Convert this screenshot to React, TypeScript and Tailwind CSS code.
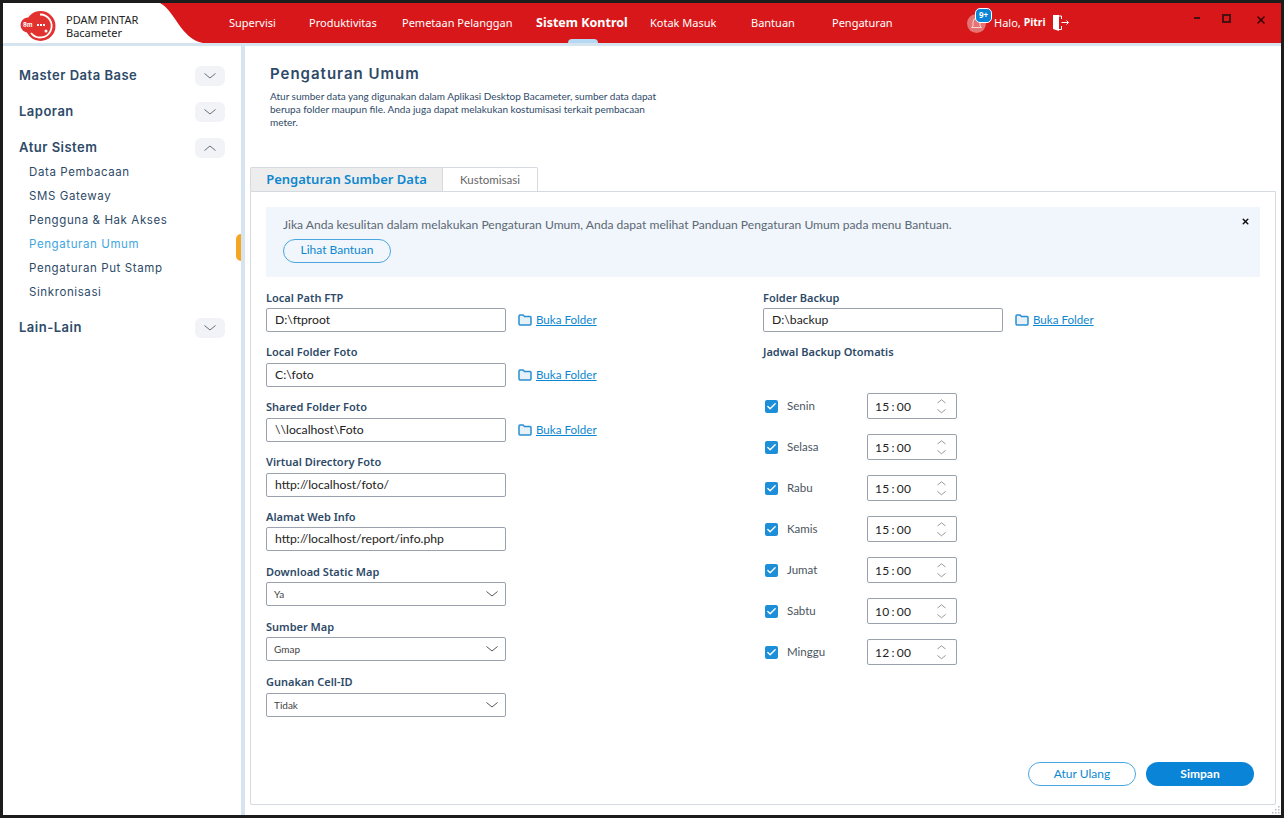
import React from 'react';
import { Check, X } from 'lucide-react';

const navItems = [
  { label: 'Supervisi', width: 'w-[80px]' },
  { label: 'Produktivitas', width: 'w-[93px]' },
  { label: 'Pemetaan Pelanggan', width: 'w-[134px]' },
  { label: 'Sistem Kontrol', width: 'w-[114px]', active: true },
  { label: 'Kotak Masuk', width: 'w-[101px]' },
  { label: 'Bantuan', width: 'w-[81px]' },
  { label: 'Pengaturan', width: 'w-[135px]' },
];

const menuItems = ['Data Pembacaan', 'SMS Gateway', 'Pengguna & Hak Akses', 'Pengaturan Umum', 'Pengaturan Put Stamp', 'Sinkronisasi'];

const schedule = [
  { day: 'Senin', time: ['15', '00'] },
  { day: 'Selasa', time: ['15', '00'] },
  { day: 'Rabu', time: ['15', '00'] },
  { day: 'Kamis', time: ['15', '00'] },
  { day: 'Jumat', time: ['15', '00'] },
  { day: 'Sabtu', time: ['10', '00'] },
  { day: 'Minggu', time: ['12', '00'] },
];

// the app's chevrons are wider and flatter than the lucide ones
const Chevron = ({ up, width = 12, color = '#666' }: { up?: boolean; width?: number; color?: string }) => (
  <svg width={width} height={width / 2} viewBox="0 0 12 6" fill="none" stroke={color} strokeWidth="1" className={up ? 'rotate-180' : ''}>
    <path d="M0.500 0.500 6 5 11.500 0.500" />
  </svg>
);

const Logo = () => (
  <svg width="36" height="32" viewBox="0 0 36 32">
    <circle cx="20.500" cy="16" r="15" fill="#e2322f" />
    <circle cx="8" cy="15" r="7.500" fill="#e2322f" />
    <path d="M20 4.500a11.500 11.500 0 1 1-9 18.500" fill="none" stroke="#fff" strokeWidth="1.800" />
    <text x="3" y="17" fontSize="6" fill="#fff" fontFamily="Inter, sans-serif" fontWeight="700">8m</text>
    <rect x="17" y="14" width="2" height="2" fill="#fff" />
    <rect x="20" y="14" width="2" height="2" fill="#fff" />
    <rect x="23" y="14" width="2" height="2" fill="#fff" />
    <circle cx="26" cy="21" r="1.500" fill="#fff" />
  </svg>
);

const Header = () => (
  <div className="flex h-10 shrink-0 bg-[#d7171a] font-['Noto_Sans',sans-serif] text-white">
    <div className="flex w-[156px] shrink-0 items-center bg-white pl-[17px] pt-[5px] text-black">
      <Logo />
      <div className="ml-[10px] text-[11px] leading-[13px] text-[#222]">
        <div>PDAM PINTAR</div>
        <div>Bacameter</div>
      </div>
    </div>
    <svg width="46" height="40" viewBox="0 0 46 40" className="shrink-0">
      <path d="M0 0H1C16 8 22 36 44 40H0Z" fill="#fff" />
    </svg>
    <nav className="ml-[24px] flex items-center text-[11px]">
      {navItems.map((item) => (
        <div key={item.label} className={`relative flex h-10 items-center whitespace-nowrap ${item.width}`}>
          <span className={item.active ? 'text-[12.500px] font-bold' : ''}>{item.label}</span>
          {item.active && <span className="absolute bottom-0 left-[32px] h-1 w-[30px] rounded-t bg-[#b5d9f3]" />}
        </div>
      ))}
    </nav>
    <div className="relative flex items-center text-[11px]">
      <div className="relative flex h-[19px] w-[19px] items-center justify-center rounded-full bg-[#e57373]">
        <svg width="13" height="14" viewBox="0 0 13 14" fill="none" stroke="#f7d5d5" strokeWidth="1">
          <path d="M3 10V6a3.500 3.500 0 0 1 7 0v4l1.500 1.500h-10Z" />
        </svg>
        <span className="absolute left-[8px] top-[-6px] flex h-[15px] w-[17px] items-center justify-center rounded-[5px] border border-white bg-[#0a84d6] text-[8px] font-bold">9+</span>
      </div>
      <span className="ml-[8px]">Halo,&nbsp;</span>
      <span className="text-[10.500px] font-bold">Pitri</span>
      <svg className="ml-[6px]" width="17" height="18" viewBox="0 0 17 18" fill="none">
        <path d="M1 1h6v16L1 15Z" fill="#fff" />
        <path d="M7 2h2.500v3M9.500 12v3.500H7" stroke="#fff" />
        <path d="M9.500 8.500h7M14.500 6.500l2 2-2 2" stroke="#fff" />
      </svg>
    </div>
    <div className="ml-auto flex items-start gap-[23px] pr-[14px] pt-[11px]">
      <span className="mt-[3px] h-[2px] w-[6px] bg-[#4a1010]" />
      <span className="ml-[-1px] h-[9px] w-[9px] border-2 border-[#4a1010]" />
      <X size={12} strokeWidth={3} className="ml-[1px] text-[#300]" />
    </div>
  </div>
);

const SectionHead = ({ label, open }: { label: string; open?: boolean }) => (
  <div className="flex h-5 items-center justify-between pl-[16px] pr-[16px]">
    <span className="text-[13px] font-semibold tracking-[0.5px] text-[#2e4a68]">{label}</span>
    <span className="flex h-5 w-[30px] items-center justify-center rounded-md bg-[#f2f3f7]">
      <Chevron up={open} color="#66707c" />
    </span>
  </div>
);

const Sidebar = () => (
  <aside className="relative flex w-[238px] shrink-0 flex-col bg-white pt-5 font-['Inter',sans-serif]">
    <SectionHead label="Master Data Base" />
    <div className="mt-4"><SectionHead label="Laporan" /></div>
    <div className="mt-4"><SectionHead label="Atur Sistem" open /></div>
    <div className="mt-[3px] pl-[26px] text-[11.500px] tracking-[0.6px] text-[#2e4a68]">
      {menuItems.map((m) => (
        <div key={m} className={`flex h-6 items-center ${m === 'Pengaturan Umum' ? 'text-[#3ea6e0]' : ''}`}>{m}</div>
      ))}
    </div>
    <div className="mt-[13px]"><SectionHead label="Lain-Lain" /></div>
    <span className="absolute right-0 top-[188px] h-[27px] w-[5px] rounded-l-md bg-[#f5a623]" />
  </aside>
);

const FieldLabel = ({ children }: { children: React.ReactNode }) => (
  <div className="font-['Noto_Sans',sans-serif] text-[11px] font-semibold leading-[15px] text-[#2e4a68]">{children}</div>
);

const FolderIcon = () => (
  <svg width="14" height="12" viewBox="0 0 14 12" fill="#e6f1fa" stroke="#2a8fd0" strokeWidth="1.500">
    <path d="M1 2.200c0-.7.400-1.200 1-1.200h3l1.500 1.500H12c.6 0 1 .5 1 1.100v6.200c0 .7-.4 1.200-1 1.200H2c-.6 0-1-.5-1-1.200Z" />
  </svg>
);

const OpenFolder = () => (
  <a className="ml-[12px] flex items-center gap-[4px] text-[11.600px] text-[#0d87cf] underline">
    <FolderIcon />
    Buka Folder
  </a>
);

type FieldProps = { label: string; value: string; gap: string; inputGap?: string };

const TextField = ({ label, value, folder, gap, inputGap = 'mt-[3px]' }: FieldProps & { folder?: boolean }) => (
  <div className={gap}>
    <FieldLabel>{label}</FieldLabel>
    <div className={`flex items-center ${inputGap}`}>
      <div className="flex h-6 w-[240px] items-center rounded-[2px] border border-[#9aa3ad] px-2 text-[12.200px] text-[#222]">{value}</div>
      {folder && <OpenFolder />}
    </div>
  </div>
);

const SelectField = ({ label, value, gap, inputGap = 'mt-[3px]' }: FieldProps) => (
  <div className={gap}>
    <FieldLabel>{label}</FieldLabel>
    <div className={`flex h-6 w-[240px] items-center justify-between rounded-[2px] border border-[#9aa3ad] pl-[7px] pr-[7px] text-[10px] text-[#444] ${inputGap}`}>
      <span className="mt-[1px]">{value}</span>
      <Chevron color="#555" />
    </div>
  </div>
);

const ScheduleRow = ({ day, time }: { day: string; time: string[] }) => (
  <div className="flex h-[26px] items-center">
    <span className="ml-[2px] flex h-[13px] w-[13px] items-center justify-center rounded-[2px] bg-[#1d8fd8] text-white">
      <Check size={11} strokeWidth={3} />
    </span>
    <span className="ml-[9px] w-[80px] text-[11.500px] text-[#4a5560]">{day}</span>
    <div className="flex h-[26px] w-[90px] items-center justify-between rounded-[2px] border border-[#9aa3ad] pl-[7px] pr-[10px] text-[12px] tracking-[0.3px] text-[#222]">
      <span className="mt-[2px] flex gap-[2px]"><span>{time[0]}</span><span>:</span><span>{time[1]}</span></span>
      <span className="flex flex-col items-center gap-[6px]">
        <Chevron up width={9} color="#777" />
        <Chevron width={9} color="#777" />
      </span>
    </div>
  </div>
);

const Content = () => (
  <main className="flex min-w-0 flex-1 flex-col bg-white pl-[5px] pr-[5px] font-['Lato',sans-serif]">
    <div className="h-[121px] pl-5 pt-[18px]">
      <h1 className="font-['Inter',sans-serif] text-[15px] font-semibold leading-[20px] tracking-[1px] text-[#2e4a68]">Pengaturan Umum</h1>
      <p className="mt-[6px] w-[395px] text-[10px] leading-[13px] text-[#2e4a68]">
        Atur sumber data yang digunakan dalam Aplikasi Desktop Bacameter, sumber data dapat berupa folder maupun file. Anda juga dapat melakukan kostumisasi terkait pembacaan meter.
      </p>
    </div>
    <div className="relative z-10 flex h-6 items-stretch">
      <div className="flex w-[193px] items-center justify-center rounded-tl-[2px] border border-b-0 border-[#d5d9e0] bg-[#ededed] font-['Noto_Sans',sans-serif] text-[13px] font-semibold text-[#0d87cf]">Pengaturan Sumber Data</div>
      <div className="flex w-[95px] items-center justify-center rounded-tr-[2px] border border-b-0 border-l-0 border-[#d5d9e0] bg-white text-[11.500px] text-[#666]">Kustomisasi</div>
    </div>
    <div className="flex h-[614px] flex-col rounded-b-[2px] border border-[#d5d9e0] px-[15px] pt-[15px]">
      <div className="relative h-[70px] bg-[#f0f6fc] pl-[17px] pt-[9px]">
        <p className="text-[12.100px] leading-[17px] text-[#5c6873]">Jika Anda kesulitan dalam melakukan Pengaturan Umum, Anda dapat melihat Panduan Pengaturan Umum pada menu Bantuan.</p>
        <button className="mt-[6px] flex h-6 w-[108px] items-center justify-center rounded-full border border-[#4ba6e0] pb-[2px] text-[12px] text-[#0d87cf]">Lihat Bantuan</button>
        <X size={9} strokeWidth={4} className="absolute right-[10px] top-[10px] text-[#111]" />
      </div>
      <div className="mt-[13px] flex flex-1">
        <div className="w-[497px] shrink-0">
          <TextField label="Local Path FTP" value="D:\ftproot" folder gap="" />
          <TextField label="Local Folder Foto" value="C:\foto" folder gap="mt-[12px]" inputGap="mt-[4px]" />
          <TextField label="Shared Folder Foto" value="\\localhost\Foto" folder gap="mt-[12px]" inputGap="mt-[4px]" />
          <TextField label="Virtual Directory Foto" value="http://localhost/foto/" gap="mt-[12px]" inputGap="mt-[4px]" />
          <TextField label="Alamat Web Info" value="http://localhost/report/info.php" gap="mt-[12px]" />
          <SelectField label="Download Static Map" value="Ya" gap="mt-[13px]" />
          <SelectField label="Sumber Map" value="Gmap" gap="mt-[13px]" />
          <SelectField label="Gunakan Cell-ID" value="Tidak" gap="mt-[13px]" inputGap="mt-[4px]" />
        </div>
        <div className="flex-1">
          <TextField label="Folder Backup" value="D:\backup" folder gap="" />
          <div className="mt-[12px]"><FieldLabel>Jadwal Backup Otomatis</FieldLabel></div>
          <div className="mt-[34px] flex flex-col gap-[15px]">
            {schedule.map((s) => <ScheduleRow key={s.day} day={s.day} time={s.time} />)}
          </div>
        </div>
      </div>
      <div className="mb-[18px] flex justify-end gap-[10px] pr-[6px]">
        <button className="h-6 w-[108px] rounded-full border border-[#4ba6e0] text-[12px] text-[#0d87cf]">Atur Ulang</button>
        <button className="h-6 w-[108px] rounded-full bg-[#0a84d6] text-[12px] font-bold text-white">Simpan</button>
      </div>
    </div>
    <div className="flex flex-1 justify-end">
      <svg width="12" height="10" viewBox="0 0 12 10" fill="#b8bcc2" className="mr-[-5px]">
        <rect x="9" y="1" width="1.500" height="1.500" /><rect x="6" y="4" width="1.500" height="1.500" /><rect x="9" y="4" width="1.500" height="1.500" />
        <rect x="3" y="7" width="1.500" height="1.500" /><rect x="6" y="7" width="1.500" height="1.500" /><rect x="9" y="7" width="1.500" height="1.500" />
      </svg>
    </div>
  </main>
);

export default function App() {
  return (
    <div className="flex h-[818px] w-[1284px] flex-col overflow-hidden border-x-[3px] border-b-[3px] border-t-[3px] border-[#1c1c1c] bg-white">
      <Header />
      <div className="h-[3px] shrink-0 bg-[#d6e4ef]" />
      <div className="flex min-h-0 flex-1">
        <Sidebar />
        <div className="w-1 shrink-0 bg-[#d6e4ef]" />
        <Content />
      </div>
    </div>
  );
}
